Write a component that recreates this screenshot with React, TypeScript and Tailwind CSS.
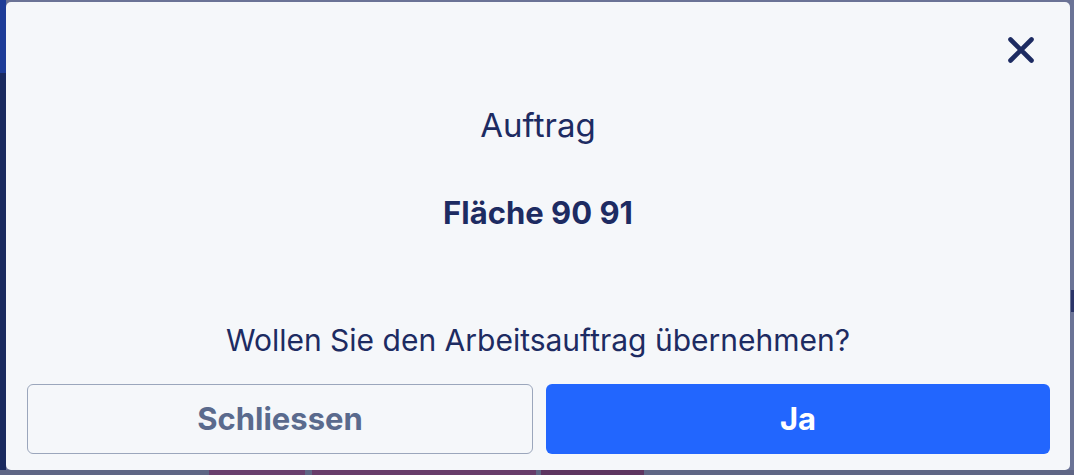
function Backdrop() {
  return (
    <div className="absolute inset-0 flex flex-col bg-[#6b7396]">
      <div className="flex flex-1">
        <div className="flex w-[6px] flex-col">
          <div className="h-[73px] bg-[#1d3c98]" />
          <div className="flex-1 bg-[#1a2a5f]" />
        </div>
        <div className="flex-1" />
        <div className="mt-[290px] h-[22px] w-[3px] bg-[#2a3468]" />
      </div>
      <div className="flex h-[5px] bg-[#5f6685]">
        <div className="w-[209px]" />
        <div className="w-[96px] bg-[#6a3f6e]" />
        <div className="w-[7px]" />
        <div className="w-[224px] bg-[#683c6a]" />
        <div className="w-[5px]" />
        <div className="w-[103px] bg-[#5e3560]" />
      </div>
    </div>
  );
}

function CloseIcon() {
  return (
    <svg width="30" height="30" viewBox="0 0 30 30" fill="none">
      <path
        d="M4.5 4.5L25.5 25.5M25.5 4.5L4.5 25.5"
        stroke="currentColor"
        strokeWidth="4.6"
        strokeLinecap="round"
      />
    </svg>
  );
}

export default function App() {
  return (
    <div
      className="relative h-[475px] w-full overflow-hidden"
      style={{ fontFamily: "Inter, 'Noto Sans', sans-serif" }}
    >
      <Backdrop />
      <div className="absolute left-[6px] top-[2px] flex h-[468px] w-[1064px] flex-col items-center rounded-[5px] bg-[#f5f7fa] pt-[103px] text-[#1d2b62]">
        <button className="absolute right-[34px] top-[33px] text-[#1d2b62]">
          <CloseIcon />
        </button>
        <h2 className="text-[33px] leading-[40px] font-normal">Auftrag</h2>
        <p className="mt-[49px] text-[31px] leading-[38px] font-bold">Fläche 90 91</p>
        <p className="mt-[90px] text-[30px] leading-[36px] font-normal">
          Wollen Sie den Arbeitsauftrag übernehmen?
        </p>
        <div className="mt-[26px] flex w-full gap-[13px] pl-[21px] pr-[20px]">
          <button className="h-[70px] flex-1 rounded-[6px] border-[1.5px] border-[#9ba6bc] text-[31px] font-bold text-[#5a6a8d]">
            Schliessen
          </button>
          <button className="h-[70px] flex-1 rounded-[6px] bg-[#2266fe] text-[31px] font-bold text-white">
            Ja
          </button>
        </div>
      </div>
    </div>
  );
}
